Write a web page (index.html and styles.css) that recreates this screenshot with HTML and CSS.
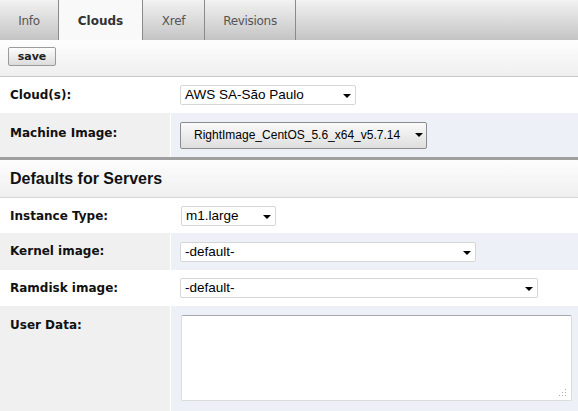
FILE: index.html
```html
<!DOCTYPE html>
<html>
<head>
<meta charset="utf-8">
<link rel="stylesheet" href="styles.css">
</head>
<body>
<div class="tabs">
  <div class="tab t-info">Info</div>
  <div class="tab active t-clouds">Clouds</div>
  <div class="tab t-xref">Xref</div>
  <div class="tab t-rev">Revisions</div>
</div>
<div class="toolbar">
  <button class="save">save</button>
</div>
<div class="form">
  <div class="row r-cloud">
    <div class="label">Cloud(s):</div>
    <div class="value"><div class="select w-cloud"><span>AWS SA-São Paulo</span><i class="arrow"></i></div></div>
  </div>
  <div class="row alt r-machine">
    <div class="label">Machine Image:</div>
    <div class="value"><div class="btnselect"><span>RightImage_CentOS_5.6_x64_v5.7.14</span><i class="arrow"></i></div></div>
  </div>
</div>
<div class="section">Defaults for Servers</div>
<div class="form">
  <div class="row r-inst">
    <div class="label">Instance Type:</div>
    <div class="value"><div class="select w-inst"><span>m1.large</span><i class="arrow"></i></div></div>
  </div>
  <div class="row alt r-kernel">
    <div class="label">Kernel image:</div>
    <div class="value"><div class="select w-kernel"><span>-default-</span><i class="arrow"></i></div></div>
  </div>
  <div class="row r-ram">
    <div class="label">Ramdisk image:</div>
    <div class="value"><div class="select w-ram"><span>-default-</span><i class="arrow"></i></div></div>
  </div>
  <div class="row alt r-user">
    <div class="label">User Data:</div>
    <div class="value"><div class="textarea"><svg class="grip" width="9" height="9" viewBox="0 0 9 9"><g fill="#aaa"><rect x="7" y="1" width="1" height="1"/><rect x="7" y="4" width="1" height="1"/><rect x="7" y="7" width="1" height="1"/><rect x="4" y="4" width="1" height="1"/><rect x="4" y="7" width="1" height="1"/><rect x="1" y="7" width="1" height="1"/></g></svg></div></div>
  </div>
</div>
</body>
</html>
```
FILE: styles.css
```css
html, body { margin: 0; padding: 0; }
body {
  width: 578px;
  height: 411px;
  overflow: hidden;
  background: #fff;
  font-family: "DejaVu Sans", Verdana, sans-serif;
  color: #000;
}
.tabs {
  display: flex;
  height: 40px;
  background: linear-gradient(#f2f2f2, #c4c4c4);
}
.tab {
  display: flex;
  align-items: center;
  justify-content: center;
  font-size: 12px;
  color: #555;
  border-right: 1px solid #8a8a8a;
  letter-spacing: -0.3px;
  padding-top: 1px;
  box-sizing: border-box;
}
.t-info { width: 59px; }
.t-clouds { width: 84px; }
.t-xref { width: 62px; }
.t-rev { width: 91px; }
.tab.active {
  background: #f9f9f9;
  color: #333;
  font-weight: bold;
  letter-spacing: 0;
}
.toolbar {
  height: 37px;
  background: linear-gradient(#fefefe, #efefef);
  border-bottom: 1px solid #c8c8c8;
  box-sizing: border-box;
  padding: 7px 0 0 8px;
}
.save {
  display: block;
  width: 48px;
  height: 19px;
  padding: 0;
  margin: 0;
  font-family: "DejaVu Sans", Verdana, sans-serif;
  font-size: 11px;
  font-weight: bold;
  color: #222;
  background: linear-gradient(#fdfdfd, #dcdcdc);
  border: 1px solid #9a9a9a;
  border-radius: 2px;
}
.row {
  display: flex;
  background: #fff;
}
.label {
  width: 170px;
  box-sizing: border-box;
  padding: 11px 0 0 10px;
  font-size: 12px;
  font-weight: bold;
  color: #111;
}
.value {
  flex: 1;
  border-left: 1px solid #fff;
  padding: 8px 0 0 9px;
}
.row.alt .label { background: #f0f0f0; }
.row.alt .value { background: #edf0f7; }
.r-cloud { height: 36px; }
.r-machine { height: 44px; }
.r-inst { height: 35px; }
.r-kernel { height: 37px; }
.r-ram { height: 36px; }
.r-user { height: 106px; }
.r-machine .label { padding-top: 13px; }
.r-user .label { padding-top: 12px; }
.select {
  position: relative;
  height: 20px;
  box-sizing: border-box;
  background: #fff;
  border: 1px solid #d6d6d6;
  border-radius: 2px;
  font-family: "Liberation Sans", Arial, sans-serif;
  font-size: 13.5px;
  line-height: 18px;
  padding-left: 4px;
  color: #000;
}
.w-cloud { width: 176px; }
.w-inst { width: 95px; margin-left: 1px; }
.w-kernel { width: 296px; margin-top: 1px; }
.w-ram { width: 358px; }
.arrow {
  position: absolute;
  right: 4px;
  top: 8px;
  width: 0;
  height: 0;
  border-left: 4px solid transparent;
  border-right: 4px solid transparent;
  border-top: 4px solid #000;
}
.btnselect {
  position: relative;
  width: 247px;
  height: 27px;
  box-sizing: border-box;
  border: 1px solid #8c8c8c;
  border-radius: 2px;
  background: linear-gradient(#fafafa, #dedede);
  font-family: "Liberation Sans", Arial, sans-serif;
  font-size: 12px;
  line-height: 25px;
  padding-left: 13px;
}
.btnselect .arrow { right: 3px; top: 10px; }
.r-machine .value { padding-top: 9px; }
.section {
  border-top: 3px solid #a0a0a0;
  height: 41px;
  box-sizing: border-box;
  background: linear-gradient(#fdfdfd, #efefef);
  border-bottom: 1px solid #d8d8d8;
  font-family: "Liberation Sans", Arial, sans-serif;
  font-size: 16px;
  font-weight: bold;
  padding: 10px 0 0 10px;
  color: #111;
}
.r-kernel .value { padding-top: 8px; }
.textarea {
  position: relative;
  width: 391px;
  height: 86px;
  margin-left: 1px;
  margin-top: 1px;
  box-sizing: border-box;
  background: #fff;
  border: 1px solid #dcdcdc;
  border-top-color: #a5a8b0;
  border-radius: 2px;
}
.grip { position: absolute; right: 4px; bottom: 3px; }
```
